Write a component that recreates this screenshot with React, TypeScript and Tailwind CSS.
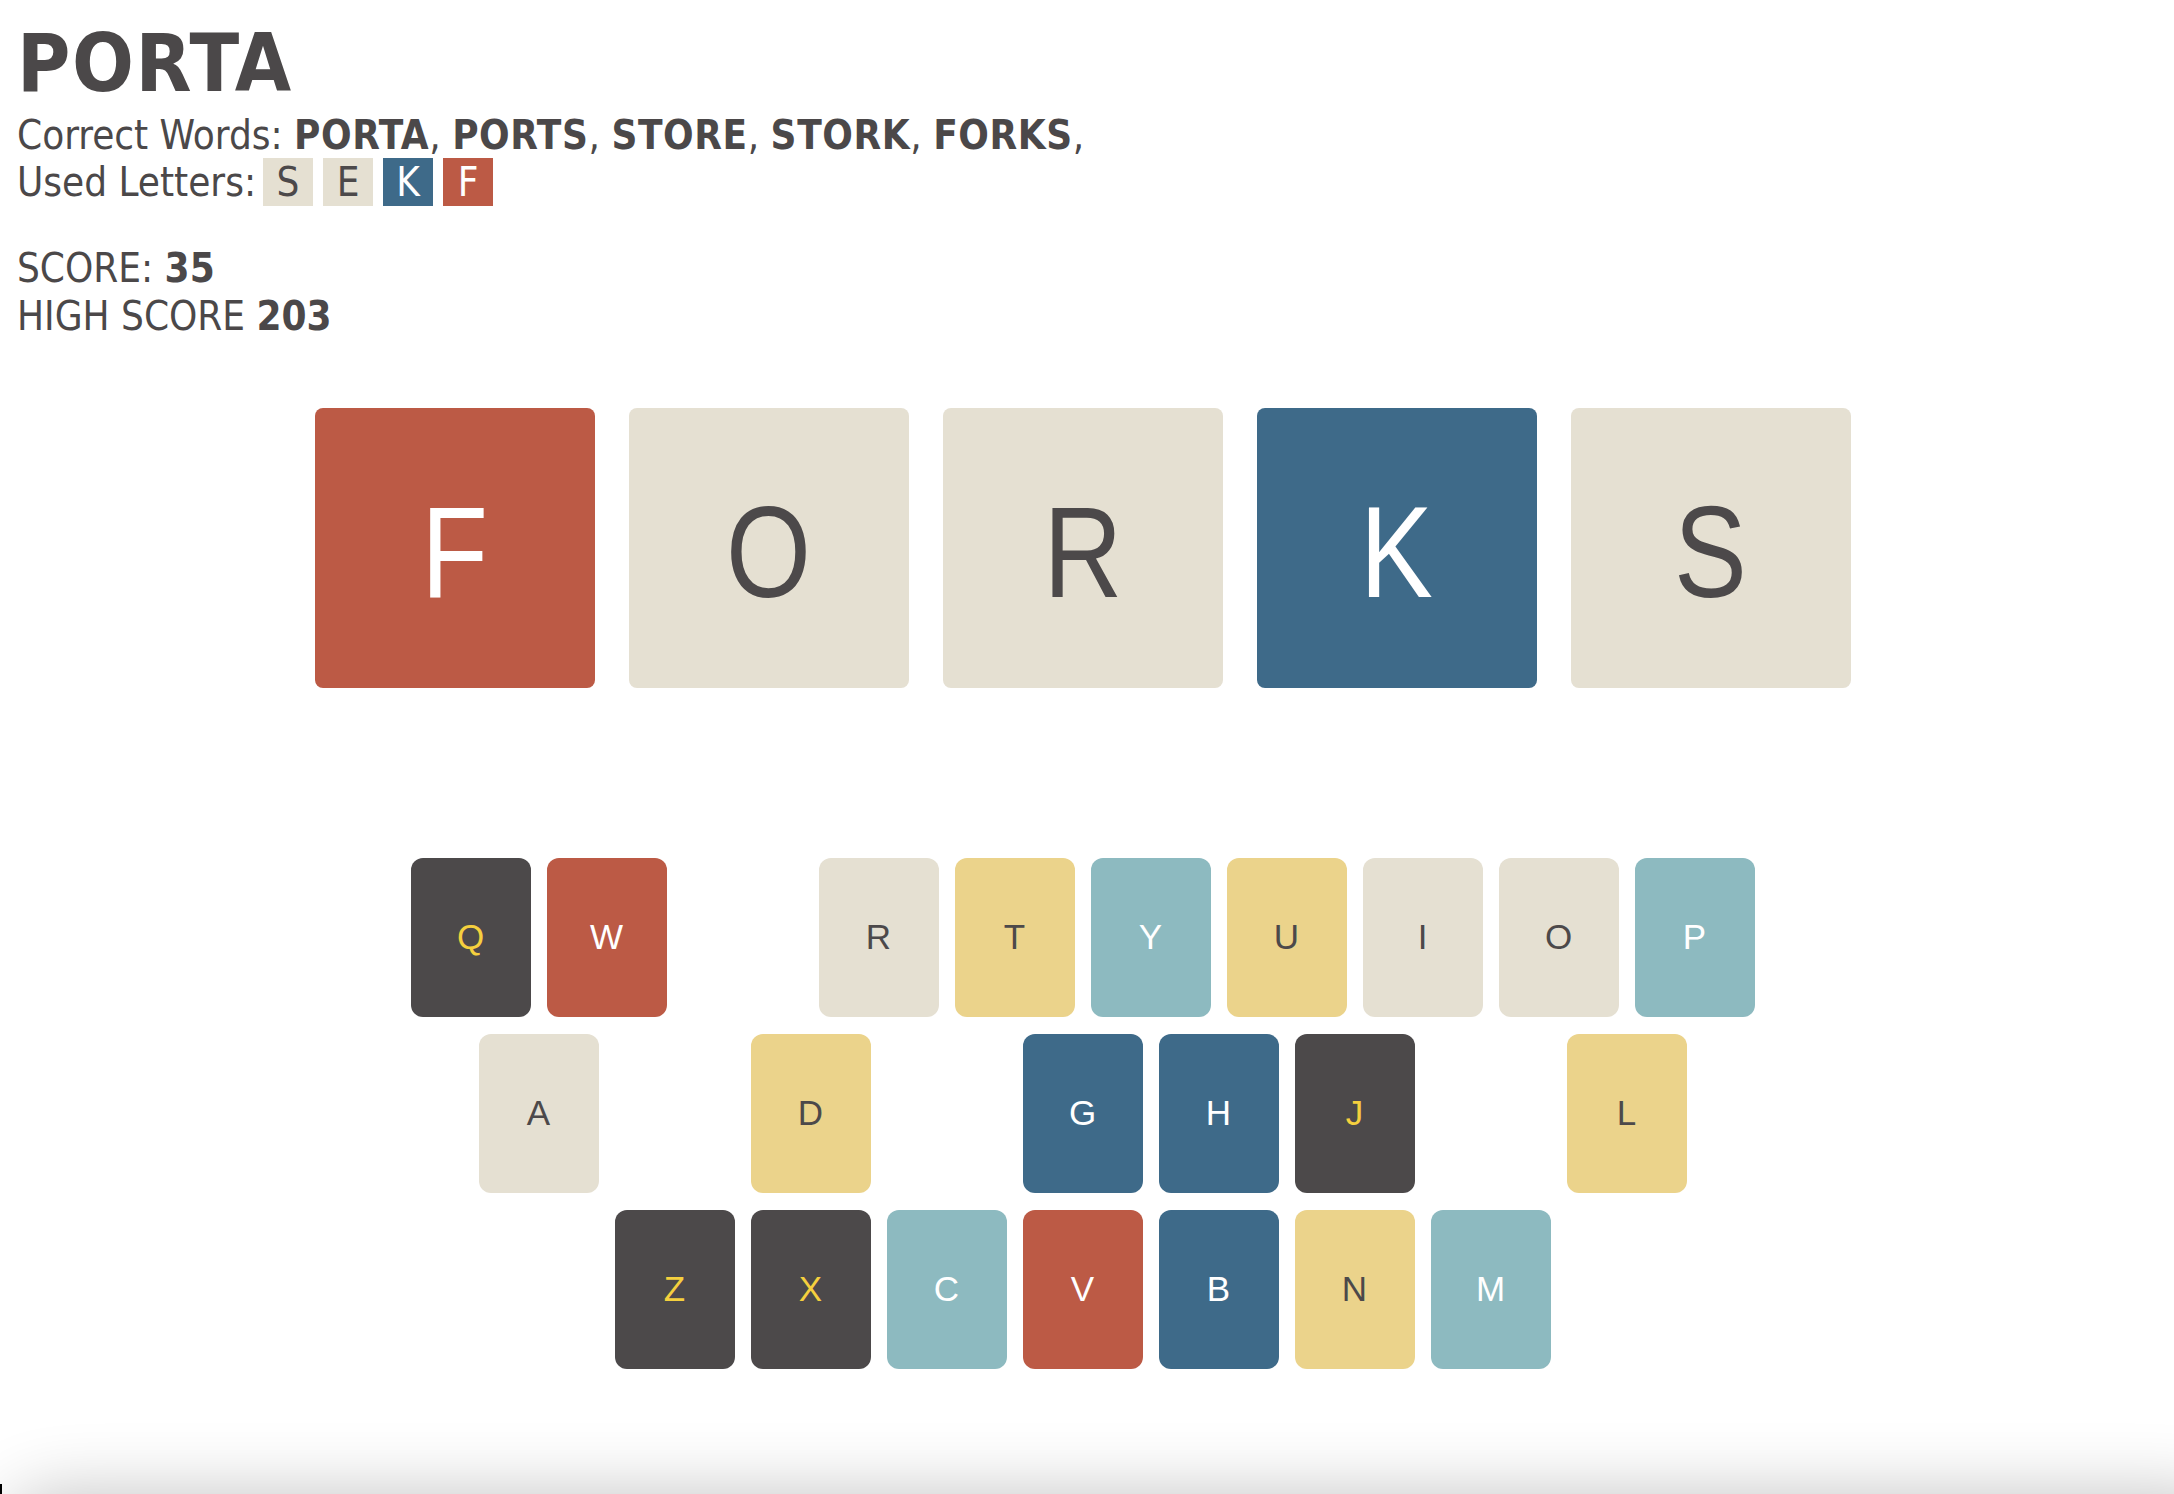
const ink = "text-[#4b4849]";

type Shade = "dark" | "red" | "beige" | "yellow" | "teal" | "blue";

const keyStyle: Record<Shade, string> = {
  dark: "bg-[#4c494a] text-[#f5d03e]",
  red: "bg-[#bc5a45] text-white",
  beige: "bg-[#e5e0d2] text-[#4c494a]",
  yellow: "bg-[#ebd38b] text-[#4c494a]",
  teal: "bg-[#8dbac0] text-white",
  blue: "bg-[#3e6a89] text-white",
};

// null = letter already gone from the keyboard
const rows: ([string, Shade] | null)[][] = [
  [["Q", "dark"], ["W", "red"], null, ["R", "beige"], ["T", "yellow"], ["Y", "teal"], ["U", "yellow"], ["I", "beige"], ["O", "beige"], ["P", "teal"]],
  [["A", "beige"], null, ["D", "yellow"], null, ["G", "blue"], ["H", "blue"], ["J", "dark"], null, ["L", "yellow"]],
  [["Z", "dark"], ["X", "dark"], ["C", "teal"], ["V", "red"], ["B", "blue"], ["N", "yellow"], ["M", "teal"]],
];

const guess: [string, Shade][] = [
  ["F", "red"],
  ["O", "beige"],
  ["R", "beige"],
  ["K", "blue"],
  ["S", "beige"],
];

const used: [string, Shade][] = [
  ["S", "beige"],
  ["E", "beige"],
  ["K", "blue"],
  ["F", "red"],
];

const words = ["PORTA", "PORTS", "STORE", "STORK", "FORKS"];

export default function App() {
  return (
    <div className="relative h-[1494px] w-full overflow-hidden bg-white">
      {/* Header */}
      <div
        className={`pl-[17px] pt-[15px] ${ink} font-['DejaVu_Sans_Condensed','DejaVu_Sans',sans-serif]`}
      >
        <h1 className="text-[81px] leading-[97px] font-bold tracking-[1.6px]">PORTA</h1>
        <div className="text-[40px] leading-[46px] whitespace-nowrap">
          Correct Words:{" "}
          {words.map((w) => (
            <span key={w}>
              <b className="tracking-[0.6px]">{w}</b>,{" "}
            </span>
          ))}
        </div>
        <div className="flex h-[48px] items-center text-[40px]">
          <span className="mr-[7px]">Used Letters:</span>
          <div className="flex gap-[10px]">
            {used.map(([l, s]) => (
              <span
                key={l}
                className={`flex h-[48px] w-[50px] items-center justify-center ${keyStyle[s]}`}
              >
                {l}
              </span>
            ))}
          </div>
        </div>
        <div className="mt-[38px] text-[40px] leading-[48px]">
          SCORE: <b>35</b>
        </div>
        <div className="text-[40px] leading-[48px]">
          HIGH SCORE <b>203</b>
        </div>
      </div>

      {/* Current guess */}
      <div className="mt-[68px] flex justify-center gap-[34px] pr-[9px] font-['Liberation_Sans',Arial,sans-serif]">
        {guess.map(([l, s], i) => (
          <div
            key={i}
            className={`flex h-[280px] w-[280px] items-center justify-center rounded-[8px] pt-[8px] text-[130px] ${keyStyle[s]}`}
          >
            <span className="inline-block scale-x-[0.84]">{l}</span>
          </div>
        ))}
      </div>

      {/* Keyboard */}
      <div className="mt-[170px] flex flex-col items-center gap-[17px] pr-[9px] font-['Liberation_Sans',Arial,sans-serif]">
        {rows.map((row, r) => (
          <div key={r} className="flex gap-[16px]">
            {row.map((k, i) =>
              k ? (
                <div
                  key={i}
                  className={`flex h-[159px] w-[120px] items-center justify-center rounded-[12px] text-[35px] ${keyStyle[k[1]]}`}
                >
                  {k[0]}
                </div>
              ) : (
                <div key={i} className="h-[159px] w-[120px]" />
              )
            )}
          </div>
        ))}
      </div>

      {/* window shadow creeping in at the bottom edge */}
      <div className="absolute top-[1494px] right-[-60px] left-[6px] h-[300px] rounded-[48px] bg-white shadow-[0_0_70px_rgba(0,0,0,0.24)]" />
      <div className="absolute bottom-0 left-0 h-[10px] w-[2px] bg-black" />
    </div>
  );
}
